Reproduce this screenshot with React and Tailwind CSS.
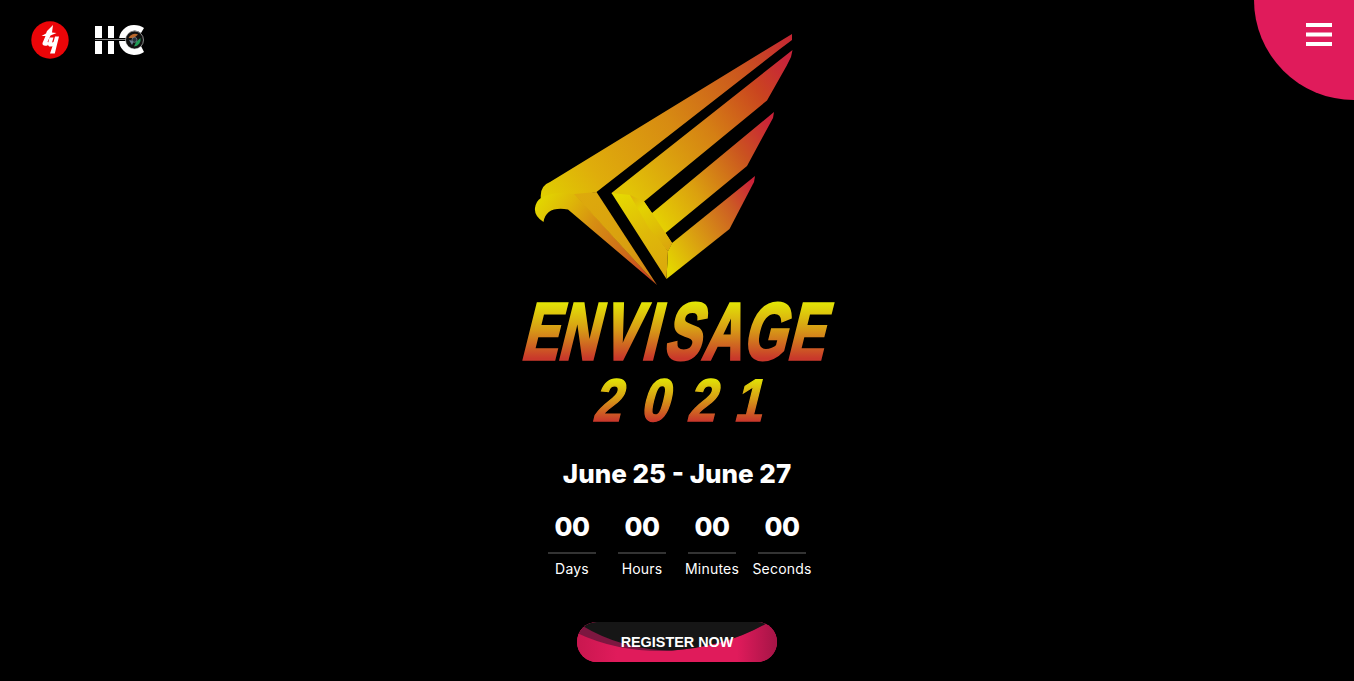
function Eagle() {
  return (
    <svg viewBox="520 20 330 410" className="block h-[410px] w-[330px] translate-x-2 overflow-visible" role="img" aria-label="Envisage 2021">
      <defs>
        <linearGradient id="top" gradientUnits="userSpaceOnUse" x1="545" y1="205" x2="793" y2="40">
          <stop offset="0" stopColor="#e0d000" />
          <stop offset="0.2" stopColor="#dfad0b" />
          <stop offset="0.5" stopColor="#d78b12" />
          <stop offset="0.8" stopColor="#cb551e" />
          <stop offset="1" stopColor="#c52633" />
        </linearGradient>
        <linearGradient id="feather1" gradientUnits="userSpaceOnUse" x1="630" y1="195" x2="797" y2="75">
          <stop offset="0" stopColor="#e2c506" />
          <stop offset="0.22" stopColor="#dca60d" />
          <stop offset="0.5" stopColor="#d58014" />
          <stop offset="0.8" stopColor="#ca451f" />
          <stop offset="1" stopColor="#c8243a" />
        </linearGradient>
        <linearGradient id="feather2" gradientUnits="userSpaceOnUse" x1="649" y1="219" x2="779" y2="134">
          <stop offset="0" stopColor="#e6d600" />
          <stop offset="0.35" stopColor="#dba00f" />
          <stop offset="0.74" stopColor="#ca5220" />
          <stop offset="1" stopColor="#ca2238" />
        </linearGradient>
        <linearGradient id="feather3" gradientUnits="userSpaceOnUse" x1="662" y1="255" x2="760" y2="195">
          <stop offset="0" stopColor="#e4d500" />
          <stop offset="0.35" stopColor="#d99b12" />
          <stop offset="0.74" stopColor="#cc5b24" />
          <stop offset="1" stopColor="#cc2239" />
        </linearGradient>
        <linearGradient id="spine" gradientUnits="userSpaceOnUse" x1="616" y1="192" x2="667" y2="279">
          <stop offset="0" stopColor="#e6dc00" />
          <stop offset="0.5" stopColor="#dfb909" />
          <stop offset="1" stopColor="#dba60d" />
        </linearGradient>
        <linearGradient id="inner" gradientUnits="userSpaceOnUse" x1="632" y1="195" x2="668" y2="248">
          <stop offset="0" stopColor="#dfb10b" />
          <stop offset="0.25" stopColor="#e3d202" />
          <stop offset="0.6" stopColor="#dfc006" />
          <stop offset="1" stopColor="#dba60d" />
        </linearGradient>
        <linearGradient id="neck" gradientUnits="userSpaceOnUse" x1="536" y1="205" x2="657" y2="285">
          <stop offset="0" stopColor="#e2d600" />
          <stop offset="0.2" stopColor="#deb508" />
          <stop offset="0.4" stopColor="#d68e12" />
          <stop offset="0.7" stopColor="#cd6a1a" />
          <stop offset="1" stopColor="#c93228" />
        </linearGradient>
        <linearGradient id="fold" gradientUnits="userSpaceOnUse" x1="580" y1="192" x2="657" y2="285">
          <stop offset="0" stopColor="#ddaa0c" />
          <stop offset="0.6" stopColor="#d99f10" />
          <stop offset="1" stopColor="#d27a18" />
        </linearGradient>
        <linearGradient id="title" gradientUnits="userSpaceOnUse" x1="0" y1="-58" x2="0" y2="0">
          <stop offset="0" stopColor="#e3ea04" />
          <stop offset="0.5" stopColor="#d79b16" />
          <stop offset="1" stopColor="#c9382b" />
        </linearGradient>
        <linearGradient id="year" gradientUnits="userSpaceOnUse" x1="0" y1="-44" x2="0" y2="0">
          <stop offset="0" stopColor="#e3ea04" />
          <stop offset="0.5" stopColor="#d79b16" />
          <stop offset="1" stopColor="#c9382b" />
        </linearGradient>
      </defs>
      <path d="M550 182 L792 34 V40 L780 49 L596.5 192 L577 196 L541 200 Q539 186 550 182Z" fill="url(#top)" />
      <path d="M541 198 Q553 191 575 194 L657 285 L568 209.500 Q546 206 543.500 222 Q534 216 535 208 Q536 201 541 198Z" fill="url(#neck)" />
      <path d="M574 194 L596.500 192 L657 285Z" fill="url(#fold)" />
      <path d="M611.500 193 L792.500 50 L791 57 L786.500 66 L767 100.500 L644 201.500 L652 213 L649 229Z" fill="url(#feather1)" />
      <path d="M649 229 L652 213 L774 112 L773 118 L747 166 L665.500 233 L672 243 L668 251Z" fill="url(#feather2)" />
      <path d="M668 251 L672 243 L755 176 L754 182 L729.500 229 L666.500 279Z" fill="url(#feather3)" />
      <path d="M611.500 193 L630 195 L649 226 L668 251 L666.500 279Z" fill="url(#spine)" />
      <path d="M630 195 L644 201.500 L652 213 L665.500 233 L672 243 L668 251 L649 228Z" fill="url(#inner)" />
      <g fontFamily="'Liberation Sans', sans-serif" fontWeight="700">
        <text
          transform="translate(523 358.500) skewX(-14) scale(.68 1)"
          x="-4 50 114 173 206 262 322 387"
          y="0"
          fontSize="80"
          fill="url(#title)"
          stroke="url(#title)"
          strokeWidth="3.5"
        >
          ENVISAGE
        </text>
        <text
          transform="translate(592 421) skewX(-14) scale(.85 1)"
          x="0 56 111 166"
          y="0"
          fontSize="60"
          fill="url(#year)"
          stroke="url(#year)"
          strokeWidth="1.5"
        >
          2021
        </text>
      </g>
    </svg>
  );
}

function Logos() {
  return (
    <div className="flex items-center gap-[26px] pt-[21px] pl-[31px]">
      <svg viewBox="0 0 38 38" className="size-[38px]">
        <circle cx="19" cy="19" r="18.7" fill="#eb0508" />
        <path
          d="M22 4 L16 10 L15 12.500 L10.500 15 L14.500 15 L11.500 22 Q11 25.500 16.500 24.500 L18 21.500 L16.500 21 L19.500 14.500 L25.500 12 L21 11.500Z"
          fill="#fff"
        />
        <path d="M18.500 16.500 H22.500 L21 21.500 L22.500 21 L24 15.500 H28 L23.800 32.500 H19 L21.500 25.300 Q16.500 26.500 17 22.500Z" fill="#fff" />
      </svg>
      <svg viewBox="95 24 50 32" className="h-8 w-[50px]">
        <path d="M95 26h7v28h-7z M108 26h6v28h-6z" fill="#fff" />
        <path d="M144 28 Q140 25 134 25 A15 15 0 0 0 134 55 Q140 55 144 52 L141 46 A9 9 0 1 1 141 33Z" fill="#fff" />
        <path d="M95 39.500h32" stroke="#000" strokeWidth="3" />
        <path d="M95 39.500h32" stroke="#bbb" strokeWidth=".7" />
        <circle cx="134.500" cy="40" r="9" fill="#111" stroke="#ddd" strokeWidth=".6" />
        <path d="M128.500 38 A7 7 0 0 1 138 34.500 L134 38Z" fill="#b8672c" />
        <path d="M140.500 38 A7 7 0 0 1 134 46.500 L136 42Z" fill="#1f9a55" />
        <path d="M129 40 L132 45 L134 41Z" fill="#6b7f94" />
        <circle cx="134.500" cy="39.800" r="2.500" fill="#26313c" stroke="#8d9aa5" strokeWidth=".6" />
      </svg>
    </div>
  );
}

const units = ["Days", "Hours", "Minutes", "Seconds"];

export default function App() {
  return (
    <div className="relative flex h-[681px] w-full flex-col overflow-hidden bg-black font-['Inter',sans-serif] text-white">
      <header className="flex h-5 items-start justify-between">
        <Logos />
        <button aria-label="Menu" className="flex h-[100px] w-[100px] shrink-0 flex-col items-end rounded-bl-full bg-[#e01b5b] pt-[23px] pr-[22px]">
          <svg viewBox="0 0 26 23" className="h-[23px] w-[26px]" fill="#fff">
            <path d="M0 0H26V4H0Z M0 9.500H26V13.500H0Z M0 19H26V23H0Z" />
          </svg>
        </button>
      </header>
      <main className="flex flex-col items-center">
        <Eagle />
        <h1 className="mt-[26px] text-[26px] leading-9 font-extrabold whitespace-nowrap">June 25 - June 27</h1>
        <div className="mt-[14px] flex gap-[22px]">
          {units.map((u) => (
            <div key={u} className="flex w-12 flex-col items-center">
              <span className="pt-px text-[26px] leading-[39px] font-extrabold tracking-[-0.6px]">00</span>
              <span className="mt-[6px] h-[2px] w-12 bg-[#333]" />
              <span className="mt-[5px] text-sm leading-5 tracking-[0.2px] whitespace-nowrap">{u}</span>
            </div>
          ))}
        </div>
        <button className="mt-[43px] grid h-10 w-[200px] place-items-center overflow-hidden rounded-full bg-[#e01b5b] font-['Liberation_Sans',sans-serif] text-[14.4px] font-bold">
          <svg viewBox="0 0 200 40" className="col-start-1 row-start-1 h-10 w-[200px]">
            <defs>
              <linearGradient id="glow">
                <stop offset="0" stopColor="#c9174f" />
                <stop offset="0.2" stopColor="#e01b5b" />
                <stop offset="0.8" stopColor="#e01b5b" />
                <stop offset="1" stopColor="#a51446" />
              </linearGradient>
            </defs>
            <path d="M0 0H200V40H0Z" fill="url(#glow)" />
            <path d="M0 0H192Q150 25 90 29Q40 30 0 11Z" fill="#7d1740" />
            <path d="M6 0H192Q150 25 95 28.500Q45 28 4 3Z" fill="#161616" />
          </svg>
          <span className="z-10 col-start-1 row-start-1 leading-5">REGISTER NOW</span>
        </button>
      </main>
    </div>
  );
}
